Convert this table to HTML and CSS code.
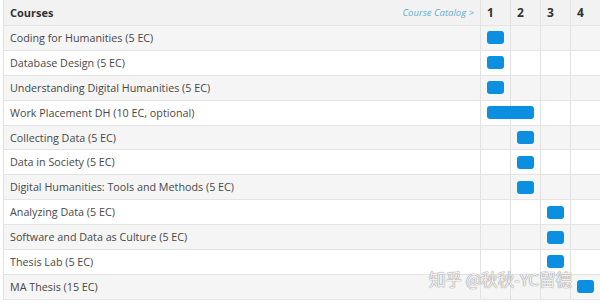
FILE: index.html
```html
<!DOCTYPE html>
<html>
<head>
<meta charset="utf-8">
<link rel="stylesheet" href="styles.css">
</head>
<body>
<div class="plan">
  <div class="row head">
    <div class="name"><span class="title">Courses</span><span class="catalog">Course Catalog &gt;</span></div>
    <div class="cell num">1</div><div class="cell num">2</div><div class="cell num">3</div><div class="cell num">4</div>
  </div>
  <div class="row odd"><div class="name">Coding for Humanities (5 EC)</div><div class="cell"></div><div class="cell"></div><div class="cell"></div><div class="cell"></div><div class="bar c1"></div></div>
  <div class="row"><div class="name">Database Design (5 EC)</div><div class="cell"></div><div class="cell"></div><div class="cell"></div><div class="cell"></div><div class="bar c1"></div></div>
  <div class="row odd"><div class="name">Understanding Digital Humanities (5 EC)</div><div class="cell"></div><div class="cell"></div><div class="cell"></div><div class="cell"></div><div class="bar c1"></div></div>
  <div class="row"><div class="name">Work Placement DH (10 EC, optional)</div><div class="cell"></div><div class="cell"></div><div class="cell"></div><div class="cell"></div><div class="bar c12"></div></div>
  <div class="row odd"><div class="name">Collecting Data (5 EC)</div><div class="cell"></div><div class="cell"></div><div class="cell"></div><div class="cell"></div><div class="bar c2"></div></div>
  <div class="row"><div class="name">Data in Society (5 EC)</div><div class="cell"></div><div class="cell"></div><div class="cell"></div><div class="cell"></div><div class="bar c2"></div></div>
  <div class="row odd"><div class="name">Digital Humanities: Tools and Methods (5 EC)</div><div class="cell"></div><div class="cell"></div><div class="cell"></div><div class="cell"></div><div class="bar c2"></div></div>
  <div class="row"><div class="name">Analyzing Data (5 EC)</div><div class="cell"></div><div class="cell"></div><div class="cell"></div><div class="cell"></div><div class="bar c3"></div></div>
  <div class="row odd"><div class="name">Software and Data as Culture (5 EC)</div><div class="cell"></div><div class="cell"></div><div class="cell"></div><div class="cell"></div><div class="bar c3"></div></div>
  <div class="row"><div class="name">Thesis Lab (5 EC)</div><div class="cell"></div><div class="cell"></div><div class="cell"></div><div class="cell"></div><div class="bar c3"></div></div>
  <div class="row odd"><div class="name">MA Thesis (15 EC)</div><div class="cell"></div><div class="cell"></div><div class="cell"></div><div class="cell"></div><div class="bar c4"></div></div>
</div>
<div class="watermark">知乎 @秋秋-YC留德</div>
</body>
</html>
```
FILE: styles.css
```css
html, body {
  margin: 0;
  padding: 0;
  background: #fff;
  overflow: hidden;
}
body {
  font-family: "Open Sans", "Liberation Sans", sans-serif;
  color: #474747;
  position: relative;
  width: 600px;
  height: 303px;
}
.plan {
  margin-left: 3px;
  border-left: 1px solid #e2e2e2;
}
.row {
  display: grid;
  grid-template-columns: 476px repeat(4, 30px);
  height: 23.9px;
  border-bottom: 1px solid #e4e4e4;
  background: #fff;
}
.row.odd {
  background: #f5f5f5;
}
.row.head {
  height: 25px;
  background: #f2f2f2;
}
.name {
  grid-row: 1;
  grid-column: 1;
  display: flex;
  align-items: center;
  justify-content: space-between;
  padding-left: 6px;
  padding-right: 6px;
  font-size: 10.75px;
}
.title {
  font-weight: 700;
  color: #333;
  font-size: 11px;
}
.catalog {
  font-style: italic;
  color: #62aed0;
  font-size: 9.5px;
}
.cell {
  grid-row: 1;
  border-left: 1px solid #e2e2e2;
}
.cell:nth-child(2) { grid-column: 2; }
.cell:nth-child(3) { grid-column: 3; }
.cell:nth-child(4) { grid-column: 4; }
.cell:nth-child(5) { grid-column: 5; }
.num {
  font-weight: 700;
  font-size: 12px;
  color: #333;
  display: flex;
  align-items: center;
  padding-left: 6px;
}
.bar {
  grid-row: 1;
  align-self: center;
  height: 13px;
  margin: 0 6px 0 7px;
  background: #0b8fe0;
  border-radius: 3px;
}
.c1 { grid-column: 2; }
.c2 { grid-column: 3; }
.c3 { grid-column: 4; }
.c4 { grid-column: 5; }
.c12 { grid-column: 2 / 4; }
.watermark {
  position: absolute;
  left: 429px;
  top: 267px;
  font-family: "Noto Sans CJK SC", sans-serif;
  font-size: 16.5px;
  color: rgba(255,255,255,0.9);
  text-shadow: 0 0 1px #8a8a8a, 0 0 1px #8a8a8a;
  white-space: nowrap;
}
```
